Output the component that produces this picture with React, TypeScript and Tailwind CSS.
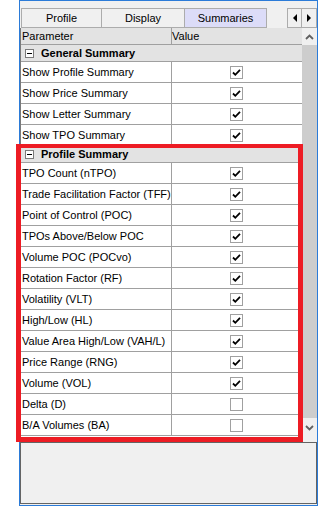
import React from "react";

type Row = { label: string; checked?: boolean; group?: boolean };

const rows: Row[] = [
	{ label: "General Summary", group: true },
	{ label: "Show Profile Summary", checked: true },
	{ label: "Show Price Summary", checked: true },
	{ label: "Show Letter Summary", checked: true },
	{ label: "Show TPO Summary", checked: true },
	{ label: "Profile Summary", group: true },
	{ label: "TPO Count (nTPO)", checked: true },
	{ label: "Trade Facilitation Factor (TFF)", checked: true },
	{ label: "Point of Control (POC)", checked: true },
	{ label: "TPOs Above/Below POC", checked: true },
	{ label: "Volume POC (POCvo)", checked: true },
	{ label: "Rotation Factor (RF)", checked: true },
	{ label: "Volatility (VLT)", checked: true },
	{ label: "High/Low (HL)", checked: true },
	{ label: "Value Area High/Low (VAH/L)", checked: true },
	{ label: "Price Range (RNG)", checked: true },
	{ label: "Volume (VOL)", checked: true },
	{ label: "Delta (D)", checked: false },
	{ label: "B/A Volumes (BA)", checked: false },
];

const CheckBox = ({ checked }: { checked?: boolean }) => (
	<div className="w-[13px] h-[13px] border border-[#a0a0a0] bg-white flex items-center justify-center">
		{checked && (
			<svg width="11" height="11" viewBox="0 0 11 11">
				<path d="M2 5.5 L4.3 7.8 L9 2.8" fill="none" stroke="#000" strokeWidth="1.8" />
			</svg>
		)}
	</div>
);

const MinusBox = () => (
	<div className="w-[9px] h-[9px] border border-[#7a7a7a] bg-white flex items-center justify-center">
		<div className="w-[5px] h-[1px] bg-black" />
	</div>
);

const Chevron = ({ up }: { up?: boolean }) => (
	<svg width="9" height="6" viewBox="0 0 9 6">
		<path d={up ? "M1 5 L4.5 1.5 L8 5" : "M1 1 L4.5 4.5 L8 1"} fill="none" stroke="#606060" strokeWidth="1.8" />
	</svg>
);

export default function App() {
	return (
		<div className="relative w-[319px] h-[506px] bg-white text-[11px] text-black font-['Liberation_Sans',Arial,sans-serif]">
			<div className="ml-[19px] w-[299px] h-[506px] border border-[#2b7bd8] bg-[#f0f0f0] flex flex-col pt-[7px]">
				{/* tabs */}
				<div className="flex h-[20px] shrink-0">
					<div className="ml-[1px] w-[81px] border border-[#acacac] flex items-center justify-center">Profile</div>
					<div className="w-[83px] border border-l-0 border-[#acacac] flex items-center justify-center">Display</div>
					<div className="w-[82px] border border-l-0 border-[#acacac] bg-[#dcdcf8] flex items-center justify-center">Summaries</div>
					<div className="flex-1" />
					<div className="w-[15px] border border-[#acacac] flex items-center justify-center">
						<div className="w-0 h-0 border-y-[4px] border-y-transparent border-r-[4px] border-r-black" />
					</div>
					<div className="w-[15px] border border-l-0 border-[#acacac] flex items-center justify-center">
						<div className="w-0 h-0 border-y-[4px] border-y-transparent border-l-[4px] border-l-black" />
					</div>
				</div>

				{/* property grid */}
				<div className="flex h-[414px] shrink-0 border-l border-[#7a7a7a]">
					<div className="w-[281px] flex flex-col bg-white">
						<div className="flex h-[17px] bg-[#e3e3e3] border-b border-[#a0a0a0] shrink-0">
							<div className="w-[150px] pl-[1px] flex items-center">Parameter</div>
							<div className="w-px bg-[#a0a0a0]" />
							<div className="flex-1 pl-[0px] flex items-center">Value</div>
						</div>
						{rows.map(r =>
							r.group ? (
								<div key={r.label} className="flex items-center h-[17px] bg-[#e3e3e3] border-b border-[#a0a0a0] shrink-0 pl-[4px] gap-[7px]">
									<MinusBox />
									<span className="font-bold">{r.label}</span>
								</div>
							) : (
								<div key={r.label} className="flex h-[21px] border-b border-[#a0a0a0] shrink-0">
									<div className="w-[150px] pl-[1px] flex items-center overflow-hidden whitespace-nowrap">{r.label}</div>
									<div className="w-px bg-[#a0a0a0]" />
									<div className="flex-1 flex items-center justify-center pr-[2px]">
										<CheckBox checked={r.checked} />
									</div>
								</div>
							)
						)}
						<div className="flex-1" />
					</div>
					{/* scrollbar */}
					<div className="w-[15px] flex flex-col items-center bg-[#f0f0f0]">
						<div className="h-[17px] flex items-center justify-center">
							<Chevron up />
						</div>
						<div className="w-full h-[373px] bg-[#cdcdcd]" />
						<div className="h-[20px] flex items-center justify-center">
							<Chevron />
						</div>
					</div>
				</div>

				{/* lower panel */}
				<div className="flex-1 border border-[#646464] bg-[#f0f0f0] mb-[1px]" />
			</div>

			{/* red highlight */}
			<div className="absolute left-[16px] top-[144px] w-[287px] h-[298px] border-l-[5px] border-t-[4px] border-r-[5px] border-b-[5px] border-[#ed1c24]" />
		</div>
	);
}
